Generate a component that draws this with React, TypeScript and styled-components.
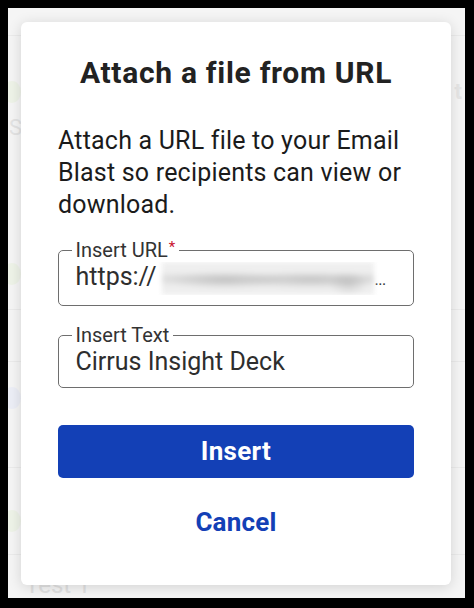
import React from "react";
import styled, { createGlobalStyle } from "styled-components";

const Global = createGlobalStyle`
  html, body { margin: 0; padding: 0; background: #000; }
  body { font-family: Roboto, "Liberation Sans", Arial, sans-serif; }
  * { box-sizing: border-box; }
`;

const Frame = styled.div`
  width: 474px;
  height: 608px;
  padding: 8px 9px 10px 8px;
  background: #000;
`;

const Screen = styled.div`
  position: relative;
  width: 100%;
  height: 100%;
  overflow: hidden;
  background: #f5f5f5;
  display: flex;
  flex-direction: column;
`;

/* ---------- faded page behind the dialog ---------- */

const BgRow = styled.div<{ $h: number; $pt?: number; $line?: boolean }>`
  flex: 0 0 ${(p) => p.$h}px;
  padding-top: ${(p) => p.$pt ?? 0}px;
  border-bottom: 1px solid ${(p) => (p.$line === false ? "transparent" : "#ebebeb")};
  display: flex;
  flex-direction: column;
  gap: 12px;
`;

const BgLine = styled.div`
  display: flex;
  justify-content: space-between;
  align-items: center;
`;

const BgIcon = styled.span<{ $c: string }>`
  width: 18px;
  height: 22px;
  margin-left: -5px;
  border-radius: 50%;
  background: ${(p) => p.$c};
`;

const BgText = styled.span`
  font: 400 22px/24px Roboto, sans-serif;
  color: #e3e3e3;
  padding-left: 1px;
`;

const BgEnd = styled.span`
  font: 700 22px/24px Roboto, sans-serif;
  color: #e6e6e6;
  margin-right: 3px;
`;

const BgBottomText = styled.span`
  font: 400 24px/24px Roboto, sans-serif;
  color: #e0e0e0;
  margin: 18px 0 0 17px;
`;

/* ---------- dialog ---------- */

const Card = styled.div`
  position: absolute;
  top: 14px;
  left: 13px;
  width: 430px;
  background: #fff;
  border-radius: 6px;
  box-shadow: 0 2px 14px rgba(0, 0, 0, 0.14);
  padding: 33px 37px 47px;
  display: flex;
  flex-direction: column;
`;

const Title = styled.h2`
  margin: 0;
  font: 700 30px/36px Roboto, "Liberation Sans", sans-serif;
  letter-spacing: 0.7px;
  color: #222;
  text-align: center;
`;

const Body = styled.p`
  margin: 33.5px 0 0;
  font: 400 25px/32px Roboto, "Liberation Sans", sans-serif;
  letter-spacing: 0.2px;
  color: #1b1b1b;
`;

const Field = styled.fieldset<{ $mt: number }>`
  margin: ${(p) => p.$mt}px 0 0;
  padding: 1.5px 16px 10px 16.5px;
  border: 1.5px solid #6e6e6e;
  border-radius: 5px;
  min-width: 0;
`;

const Legend = styled.legend`
  padding: 0 4px;
  margin-left: -4px;
  font: 400 20px/20px Roboto, "Liberation Sans", sans-serif;
  color: #333;
`;

const Req = styled.span`
  color: #c8102e;
  font-size: 15px;
  vertical-align: top;
  line-height: 14px;
  margin-left: 1px;
`;

const Value = styled.div`
  display: flex;
  align-items: baseline;
  font: 400 25px/30px Roboto, "Liberation Sans", sans-serif;
  color: #2e2e2e;
  white-space: nowrap;
  overflow: hidden;
`;

const Blurred = styled.span`
  flex: 0 0 212px;
  height: 33px;
  margin-left: 5px;
  align-self: center;
  background:
    radial-gradient(ellipse 60px 9px at 30% 55%, rgba(140, 140, 140, 0.35), transparent),
    radial-gradient(ellipse 70px 9px at 70% 55%, rgba(140, 140, 140, 0.3), transparent),
    radial-gradient(ellipse 20px 12px at 88% 65%, rgba(140, 140, 140, 0.3), transparent),
    linear-gradient(180deg, transparent 30%, rgba(160, 160, 160, 0.25) 50%, transparent 75%),
    #efefef;
  filter: blur(2.5px);
`;

const Dots = styled.span`
  font-size: 16px;
  margin-left: 1px;
  letter-spacing: -0.5px;
`;

const Primary = styled.button`
  margin-top: 37px;
  height: 53px;
  border: 0;
  border-radius: 5px;
  background: #1340b6;
  color: #fff;
  font: 700 26px/1 Roboto, "Liberation Sans", sans-serif;
  letter-spacing: 0.3px;
  cursor: pointer;
`;

const Link = styled.button`
  margin-top: 28.7px;
  align-self: center;
  padding: 0;
  border: 0;
  background: none;
  font: 700 26px/32px Roboto, "Liberation Sans", sans-serif;
  letter-spacing: 0.2px;
  color: #1340b6;
  cursor: pointer;
`;

export default function App() {
  return (
    <>
      <Global />
      <Frame>
        <Screen>
          <BgRow $h={28} />
          <BgRow $h={139} $pt={44} $line={false}>
            <BgLine>
              <BgIcon $c="#eef3e8" />
              <BgEnd>t</BgEnd>
            </BgLine>
            <BgText>Se</BgText>
          </BgRow>
          <BgRow $h={135} $pt={88}>
            <BgIcon $c="#eef3e8" />
          </BgRow>
          <BgRow $h={52} />
          <BgRow $h={106} $pt={25}>
            <BgIcon $c="#eceef6" />
          </BgRow>
          <BgRow $h={87} $pt={42}>
            <BgIcon $c="#eef3e8" />
          </BgRow>
          <BgBottomText>Test 1</BgBottomText>

          <Card role="dialog" aria-label="Attach a file from URL">
            <Title>Attach a file from URL</Title>
            <Body>
              Attach a URL file to your Email Blast so recipients can view or
              download.
            </Body>
            <Field $mt={19.5}>
              <Legend>
                Insert URL<Req>*</Req>
              </Legend>
              <Value>
                https://
                <Blurred aria-hidden="true" />
                <Dots>...</Dots>
              </Value>
            </Field>
            <Field $mt={19.8}>
              <Legend>Insert Text</Legend>
              <Value>Cirrus Insight Deck</Value>
            </Field>
            <Primary type="button">Insert</Primary>
            <Link type="button">Cancel</Link>
          </Card>
        </Screen>
      </Frame>
    </>
  );
}
